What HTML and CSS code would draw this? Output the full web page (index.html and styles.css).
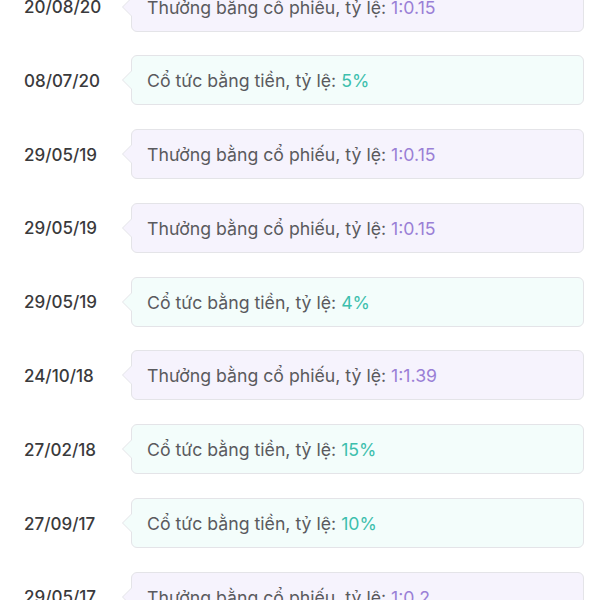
FILE: index.html
```html
<!DOCTYPE html>
<html lang="vi">
<head>
<meta charset="utf-8">
<link rel="stylesheet" href="styles.css">
</head>
<body>
<div class="list">
  <div class="row"><div class="date">20/08/20</div><div class="box bonus"><p class="txt">Thưởng bằng cổ phiếu, tỷ lệ: <span class="val">1:0.15</span></p></div></div>
  <div class="row"><div class="date">08/07/20</div><div class="box cash"><p class="txt">Cổ tức bằng tiền, tỷ lệ: <span class="val">5%</span></p></div></div>
  <div class="row"><div class="date">29/05/19</div><div class="box bonus"><p class="txt">Thưởng bằng cổ phiếu, tỷ lệ: <span class="val">1:0.15</span></p></div></div>
  <div class="row"><div class="date">29/05/19</div><div class="box bonus"><p class="txt">Thưởng bằng cổ phiếu, tỷ lệ: <span class="val">1:0.15</span></p></div></div>
  <div class="row"><div class="date">29/05/19</div><div class="box cash"><p class="txt">Cổ tức bằng tiền, tỷ lệ: <span class="val">4%</span></p></div></div>
  <div class="row"><div class="date">24/10/18</div><div class="box bonus"><p class="txt">Thưởng bằng cổ phiếu, tỷ lệ: <span class="val">1:1.39</span></p></div></div>
  <div class="row"><div class="date">27/02/18</div><div class="box cash"><p class="txt">Cổ tức bằng tiền, tỷ lệ: <span class="val">15%</span></p></div></div>
  <div class="row"><div class="date">27/09/17</div><div class="box cash"><p class="txt">Cổ tức bằng tiền, tỷ lệ: <span class="val">10%</span></p></div></div>
  <div class="row"><div class="date">29/05/17</div><div class="box bonus"><p class="txt">Thưởng bằng cổ phiếu, tỷ lệ: <span class="val">1:0.2</span></p></div></div>
</div>
</body>
</html>
```
FILE: styles.css
```css
html, body {
  margin: 0;
  padding: 0;
  background: #ffffff;
  overflow: hidden;
}
body {
  font-family: Inter, "Noto Sans", sans-serif;
}
.list {
  display: flex;
  flex-direction: column;
  gap: 23.8px;
  margin-top: -18.5px;
  padding: 0 16px 0 24px;
}
.row {
  display: flex;
  align-items: center;
  height: 50px;
}
.date {
  width: 107px;
  flex: none;
  font-size: 17px;
  font-weight: 500;
  color: #3a3a3c;
  padding-top: 1px;
}
.box {
  position: relative;
  flex: 1;
  height: 50px;
  box-sizing: border-box;
  border: 1px solid #e4e4e8;
  border-radius: 6px;
  display: flex;
  align-items: center;
  padding-left: 15px;
}
.txt {
  margin: 0;
  font-size: 17.7px;
  font-weight: 400;
  color: #5a5a5e;
  white-space: nowrap;
  padding-top: 1px;
}
.box::before,
.box::after {
  content: "";
  position: absolute;
  top: 50%;
  width: 0;
  height: 0;
  border-style: solid;
}
.box::before {
  left: -10px;
  margin-top: -10px;
  border-width: 10px 10px 10px 0;
  border-color: transparent #e4e4e8 transparent transparent;
}
.box::after {
  left: -9px;
  margin-top: -9px;
  border-width: 9px 9px 9px 0;
}
.bonus { background: #f6f3fd; }
.bonus::after { border-color: transparent #f6f3fd transparent transparent; }
.bonus .val { color: #9a7fd6; }
.cash { background: #f3fdfb; }
.cash::after { border-color: transparent #f3fdfb transparent transparent; }
.cash .val { color: #3dbfad; }
```
